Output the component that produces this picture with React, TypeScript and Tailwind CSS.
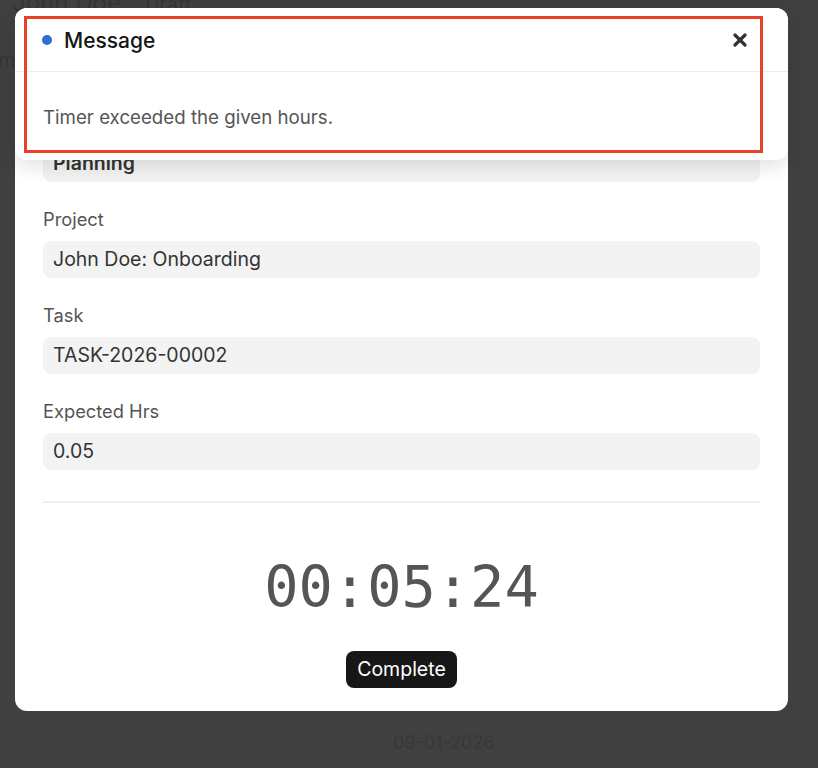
import React from "react";

const fields = [
  { label: "Activity Type", value: "Planning", bold: true },
  { label: "Project", value: "John Doe: Onboarding" },
  { label: "Task", value: "TASK-2026-00002" },
  { label: "Expected Hrs", value: "0.05" },
];

function Field({ label, value, bold }: { label: string; value: string; bold?: boolean }) {
  return (
    <div className="flex flex-col">
      <label className="text-[18.3px] leading-[22px] text-[#555555]">{label}</label>
      <div
        className={`mt-[11px] h-[37px] rounded-lg bg-[#f3f3f3] px-[10px] flex items-center text-[19.5px] text-[#333333] ${
          bold ? "font-semibold" : ""
        }`}
      >
        {value}
      </div>
    </div>
  );
}

export default function App() {
  return (
    <div
      className="relative h-[768px] w-full overflow-hidden bg-[#404040] flex flex-col"
      style={{ fontFamily: "Inter, 'Noto Sans', sans-serif" }}
    >
      {/* page behind the overlay */}
      <div className="-mt-[15px] pl-[12px] flex items-baseline gap-[24px] text-[#353535]">
        <span className="text-[24px]">John Doe</span>
        <span className="text-[20px]">Draft</span>
      </div>
      <div className="mt-[24px] -ml-[2px] text-[20px] text-[#363636]">m</div>
      <div className="mt-auto mb-[12px] pl-[393px] text-[18px] text-[#383838]">09-01-2026</div>

      {/* timer modal */}
      <div className="absolute left-[15px] top-[8px] w-[773px] rounded-xl bg-white px-[28px] pt-[104px] pb-[23px] flex flex-col">
        <div className="flex flex-col gap-[26px]">
          {fields.map((f) => (
            <Field key={f.label} {...f} />
          ))}
        </div>
        <div className="mt-[31px] h-[2px] bg-[#efefef]" />
        <div
          className="mt-[56px] text-center text-[57px] leading-none text-[#555555] slashed-zero"
          style={{ fontFamily: "'DejaVu Sans Mono', 'Liberation Mono', monospace" }}
        >
          00:05:24
        </div>
        <div className="mt-[35px] flex justify-center">
          <button className="h-[37px] rounded-lg bg-[#171717] px-[11px] text-[19.5px] text-white">
            Complete
          </button>
        </div>
      </div>

      {/* message toast */}
      <div className="absolute left-[15px] top-[8px] w-[773px] h-[152px] rounded-xl bg-white shadow-[0_8px_18px_rgba(0,0,0,0.10)] flex flex-col">
        <div className="h-[64px] flex items-center pl-[27px] pr-[38px] border-b border-[#eeeeee]">
          <span className="h-[10px] w-[10px] rounded-full bg-[#2f6fd1]" />
          <span className="ml-[12px] mt-[2px] text-[21px] font-medium text-[#151515]">Message</span>
          <button className="ml-auto flex h-[20px] w-[20px] items-center justify-center">
            <svg width="14" height="14" viewBox="0 0 14 14">
              <path d="M2 2 L12 12 M12 2 L2 12" stroke="#333333" strokeWidth="3.2" strokeLinecap="round" />
            </svg>
          </button>
        </div>
        <p className="pt-[34px] px-[28px] text-[18.7px] leading-[24px] text-[#555555]">
          Timer exceeded the given hours.
        </p>
      </div>

      {/* highlight outline */}
      <div className="absolute left-[24px] top-[16px] w-[739px] h-[137px] border-[3px] border-[#e8412a] pointer-events-none" />
    </div>
  );
}
